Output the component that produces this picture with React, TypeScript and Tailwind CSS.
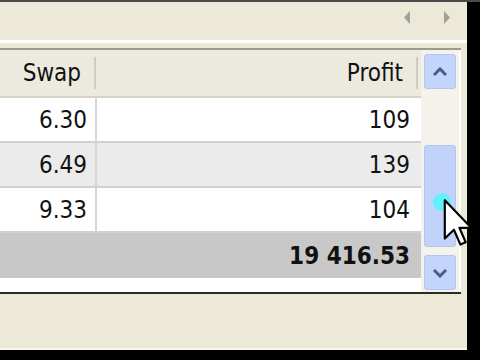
import React from 'react';

const rows = [
    { swap: "6.30", profit: "109", bg: "bg-white" },
    { swap: "6.49", profit: "139", bg: "bg-[#ebebeb]" },
    { swap: "9.33", profit: "104", bg: "bg-white" },
];

const font = { fontFamily: '"DejaVu Sans Condensed", "DejaVu Sans", sans-serif' };

const ScrollButton: React.FC<{ down?: boolean }> = ({ down }) => (
    <div className="mx-[3px] h-[35px] rounded-[3px] border border-[#b4c6ee] bg-[#c4d5fc] flex items-center justify-center">
        <svg width="16" height="10" viewBox="0 0 16 10">
            <path
                d={down ? "M2 2 L8 8 L14 2" : "M2 8 L8 2 L14 8"}
                fill="none"
                stroke="#4a5f86"
                strokeWidth="3"
            />
        </svg>
    </div>
);

export default function App() {
    return (
        <div className="relative w-[480px] h-[360px] bg-black overflow-hidden" style={font}>
            <div className="h-[2px] bg-[#4a4a48]" />
            <div className="w-[467px] h-[348px] bg-[#ece9d8] flex flex-col">
                {/* tab strip */}
                <div className="h-[38px] flex items-start justify-end gap-[32px] pr-[16px] pt-[9px]">
                    <svg width="8" height="13" viewBox="0 0 8 13"><path d="M7 0 L1 6.5 L7 13 Z" fill="#a09f9a" /></svg>
                    <svg width="8" height="13" viewBox="0 0 8 13"><path d="M1 0 L7 6.5 L1 13 Z" fill="#a09f9a" /></svg>
                </div>
                <div className="h-[3px] bg-white" />
                <div className="h-[5px]" />
                {/* grid */}
                <div className="w-[461px] h-[246px] border-t-2 border-[#9c9a90] border-b-2 border-b-[#2a2a2a] bg-white flex">
                    <div className="w-[421px] flex flex-col text-[24px] text-[#111]">
                        <div className="h-[48px] flex items-center border-b-2 border-[#d6d3c6] bg-[#eceadf]">
                            <div className="w-[96px] h-[32px] flex items-center justify-end pr-[13px] border-r-2 border-[#cfccc0]">Swap</div>
                            <div className="w-[322px] h-[32px] flex items-center justify-end pr-[13px] border-r-2 border-[#cfccc0]">Profit</div>
                        </div>
                        {rows.map((r) => (
                            <div key={r.swap} className={`h-[45px] flex border-b-2 border-[#d0d0d0] ${r.bg}`}>
                                <div className="w-[97px] flex items-center justify-end pr-[8px] border-r-2 border-[#d6d6d6]">{r.swap}</div>
                                <div className="flex-1 flex items-center justify-end pr-[11px]">{r.profit}</div>
                            </div>
                        ))}
                        <div className="h-[45px] bg-[#c8c8c8] flex items-center justify-end pr-[11px] font-bold text-[#111]">
                            19 416.53
                        </div>
                    </div>
                    <div className="w-[38px] bg-[#f4f2ea] flex flex-col pt-[4px] pb-[2px]">
                        <ScrollButton />
                        <div className="flex-1 pt-[56px] pb-[4px]">
                            <div className="mx-[3px] h-[102px] rounded-[3px] border border-[#b4c6ee] bg-[#c2d3fb]" />
                        </div>
                        <ScrollButton down />
                    </div>
                </div>
                <div className="flex-1 border-b-2 border-[#f8f7f2]" />
            </div>
            {/* click highlight + cursor */}
            <div className="absolute left-[433px] top-[193px] w-[18px] h-[18px] rounded-full bg-[#5ff2fb]" />
            <svg className="absolute left-[443px] top-[199px]" width="30" height="48" viewBox="0 0 12 20">
                <path d="M0.5 0.5 L0.5 16.5 L4.3 12.8 L7 19 L9.2 18 L6.6 12 L11.5 12 Z" fill="#fff" stroke="#000" strokeWidth="0.9" strokeLinejoin="round" />
            </svg>
        </div>
    );
}
